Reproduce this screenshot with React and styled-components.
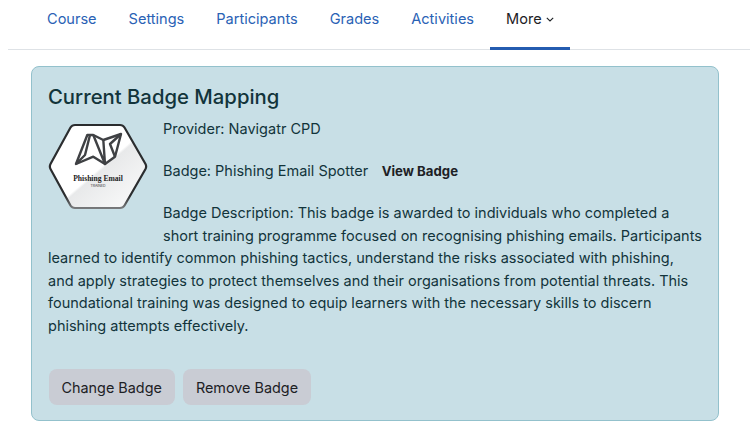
import React from "react";
import styled, { createGlobalStyle } from "styled-components";

const GlobalStyle = createGlobalStyle`
  body {
    margin: 0;
    background: #fff;
    font-family: Inter, "Liberation Sans", sans-serif;
    color: #1d2125;
  }
`;

const TABS = ["Course", "Settings", "Participants", "Grades", "Activities"];

const BadgeArt = () => (
  <BadgeSvg viewBox="0 0 100 92" aria-hidden="true">
    <defs>
      <linearGradient id="sheen" x1="0" y1="0" x2="1" y2="1">
        <stop offset="0" stopColor="#ffffff" />
        <stop offset="0.52" stopColor="#ffffff" />
        <stop offset="0.54" stopColor="#e8e9ea" />
        <stop offset="1" stopColor="#fdfdfd" />
      </linearGradient>
      <linearGradient id="rim" x1="0" y1="0" x2="0" y2="1">
        <stop offset="0" stopColor="#2b2d2f" />
        <stop offset="0.85" stopColor="#2b2d2f" />
        <stop offset="1" stopColor="#77797b" />
      </linearGradient>
    </defs>
    <path
      d="M27 5 H72 Q75 5 76.500 7.500 L97.500 44 Q98.800 46.500 97.500 49 L76.500 85.500 Q75 88 72 88 H27 Q24 88 22.500 85.500 L2.500 49 Q1.200 46.500 2.500 44 L22.500 7.500 Q24 5 27 5 Z"
      fill="url(#sheen)"
      stroke="url(#rim)"
      strokeWidth="2.2"
    />
    <g fill="none" stroke="#3f4144" strokeWidth="2.4" strokeLinejoin="round">
      <path d="M28 44 L39.300 15 H45.300 L55.300 20 L73 14 L67 36.700 L57 44 L45.300 36.700 Z" />
      <path d="M42 15 L37 35 L28 44" />
      <path d="M45.300 15 L57 44 L55.300 20" />
      <path d="M73 14 L62 24 L67 36.700" />
    </g>
  </BadgeSvg>
);

const App = () => (
  <>
    <GlobalStyle />
    <Nav>
      {TABS.map((tab) => (
        <Tab key={tab}>{tab}</Tab>
      ))}
      <ActiveTab>
        More
        <svg width="8" height="5" viewBox="0 0 8 5" fill="none" stroke="#1d2125" strokeWidth="1.1">
          <path d="M0.8 0.8 L4 4 L7.200 0.8" />
        </svg>
      </ActiveTab>
    </Nav>
    <Card>
      <Title>Current Badge Mapping</Title>
      <BadgeWrap>
        <BadgeArt />
        <BadgeName>Phishing Email</BadgeName>
        <BadgeTag>TRAINED</BadgeTag>
      </BadgeWrap>
      <Para>Provider: Navigatr CPD</Para>
      <Para>
        Badge: Phishing Email Spotter
        <ViewLink>View Badge</ViewLink>
      </Para>
      <Para>
        Badge Description: This badge is awarded to individuals who completed a short training
        programme focused on recognising phishing emails. Participants learned to identify common
        phishing tactics, understand the risks associated with phishing, and apply strategies to
        protect themselves and their organisations from potential threats. This foundational
        training was designed to equip learners with the necessary skills to discern phishing
        attempts effectively.
      </Para>
      <Actions>
        <Button>Change Badge</Button>
        <Button>Remove Badge</Button>
      </Actions>
    </Card>
  </>
);
export default App;

const Nav = styled.nav`
  display: flex;
  height: 50px;
  margin-left: 8px;
  padding-left: 23px;
  border-bottom: 1px solid #dee2e6;
  box-sizing: border-box;
  font-size: 14.55px;
`;

const Tab = styled.a`
  display: flex;
  align-items: center;
  height: 37px;
  padding: 0 16px;
  color: #2a62b5;
`;

const ActiveTab = styled(Tab)`
  gap: 4px;
  height: 50px;
  padding-bottom: 10px;
  box-sizing: border-box;
  color: #1d2125;
  border-bottom: 3px solid #245cb0;
  svg {
    margin-top: 2px;
  }
`;

const Card = styled.section`
  margin: 16px 31px 0;
  height: 355px;
  box-sizing: border-box;
  padding: 16px;
  background: #c8dfe6;
  border: 1px solid #93c1cc;
  border-radius: 8px;
  color: #12343b;
  font-size: 14.5px;
  line-height: 22.5px;
`;

const Title = styled.h2`
  margin: 0 0 7px;
  font-size: 20.3px;
  font-weight: 500;
  line-height: 28px;
`;

const BadgeWrap = styled.div`
  position: relative;
  float: left;
  width: 100px;
  height: 92px;
  margin: 2px 15px 14px 0;
  text-align: center;
`;

const BadgeSvg = styled.svg`
  display: block;
  width: 100px;
  height: 92px;
`;

const BadgeName = styled.span`
  position: absolute;
  left: 0;
  right: 0;
  top: 54px;
  font-family: "Liberation Serif", serif;
  font-size: 7.6px;
  font-weight: 700;
  line-height: 10px;
  color: #222;
`;

const BadgeTag = styled.span`
  position: absolute;
  left: 0;
  right: 0;
  top: 64px;
  font-size: 3.5px;
  line-height: 5px;
  color: #333;
`;

const Para = styled.p`
  margin: 0 0 19.500px;
`;

const ViewLink = styled.a`
  margin-left: 13.500px;
  font-size: 13.2px;
  font-weight: 700;
  color: #1d2125;
`;

const Actions = styled.div`
  display: flex;
  gap: 8px;
  margin-top: 32px;
  padding-left: 0.5px;
`;

const Button = styled.button`
  height: 36px;
  padding: 0 13px;
  border: 0;
  border-radius: 8px;
  background: #c9ccd4;
  color: #1d2125;
  font-family: inherit;
  font-size: 14.4px;
`;
